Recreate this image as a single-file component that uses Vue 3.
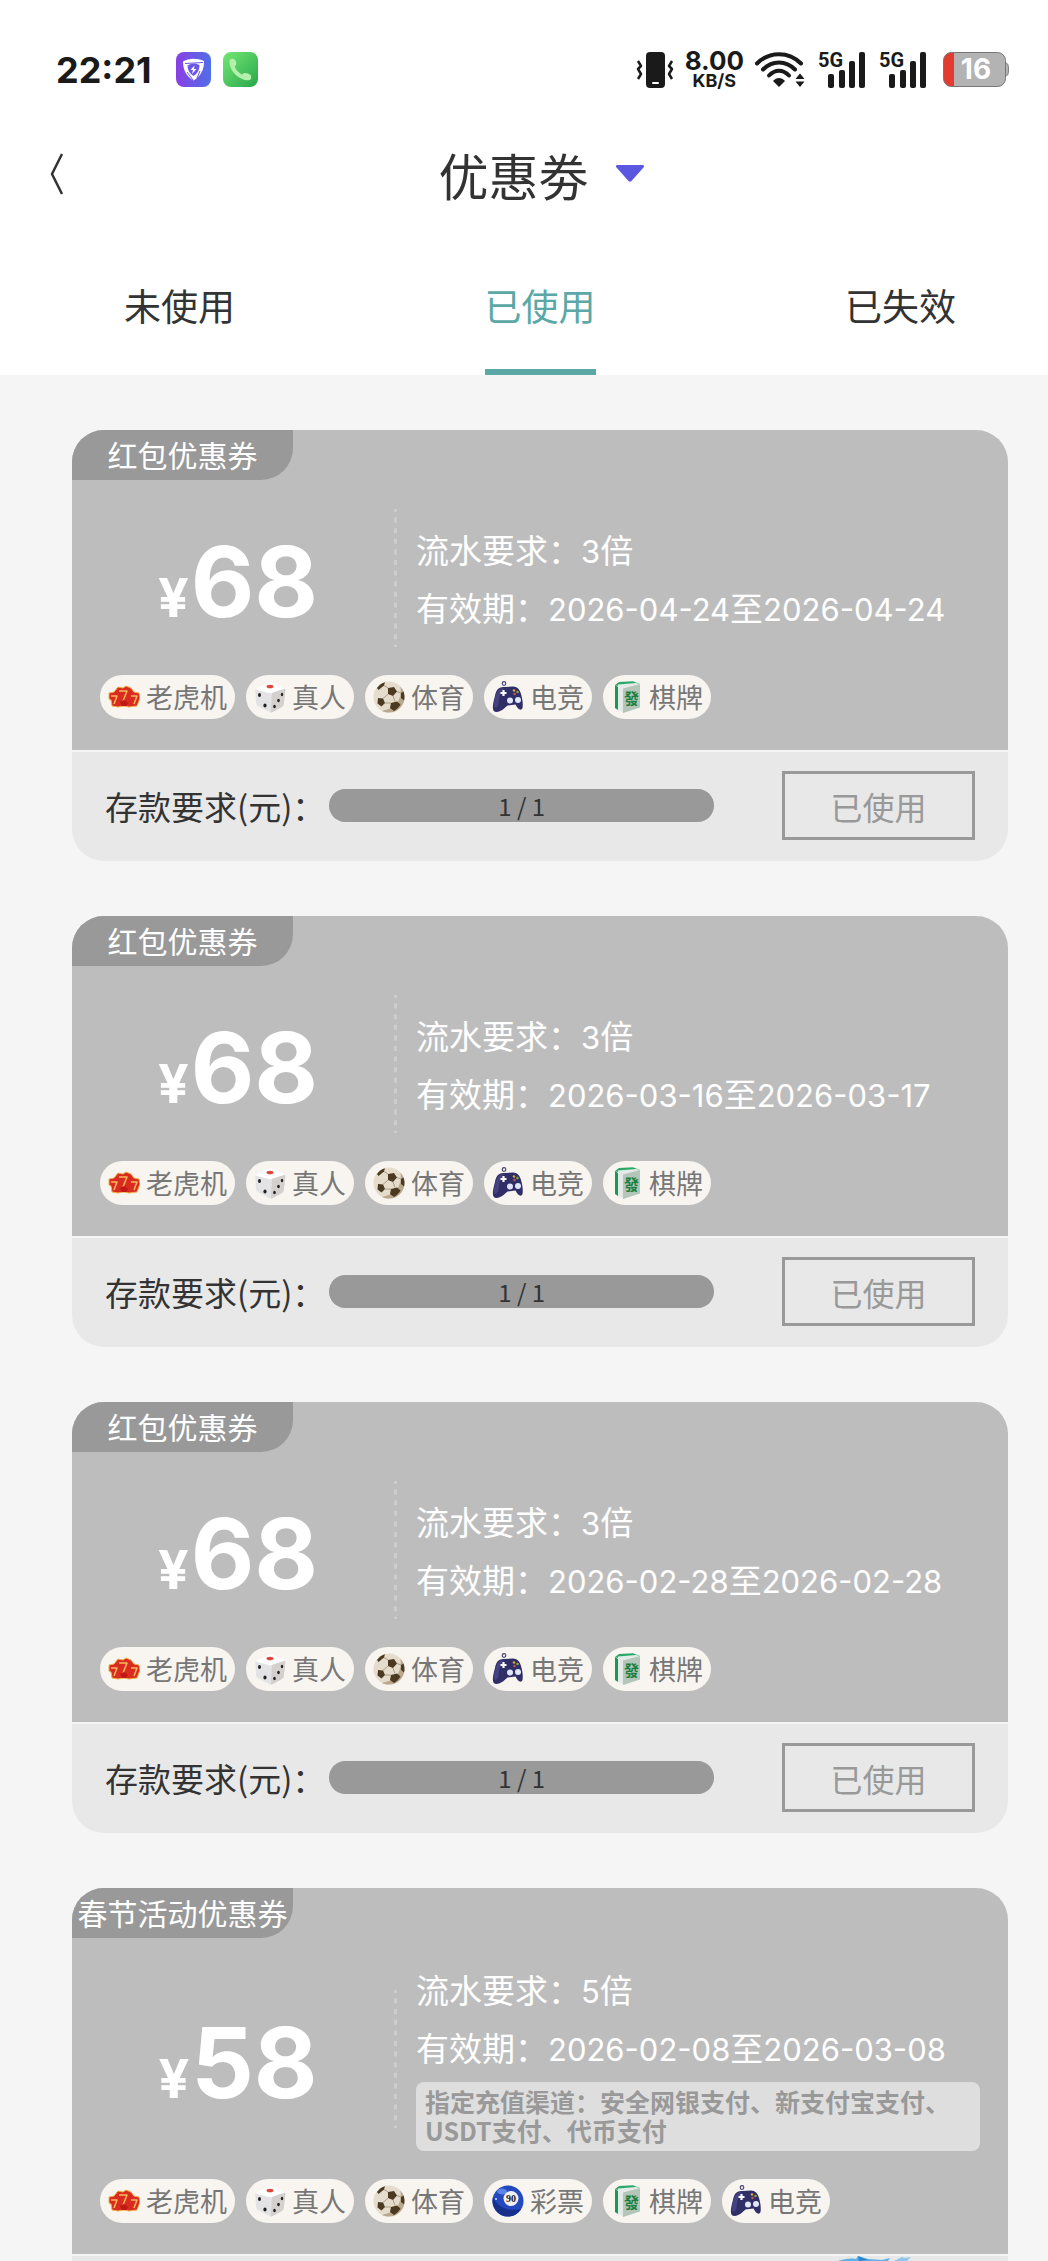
<template>
    <div class="page">
        <!-- Barre d'état -->
        <div class="status-bar">
            <span class="time">22:21</span>
            <svg class="app-icon" viewBox="0 0 35 35" aria-hidden="true">
                <defs>
                    <linearGradient id="shieldBg" x1="0" y1="0" x2="1" y2="0">
                        <stop offset="0" stop-color="#8a3fe4" />
                        <stop offset="1" stop-color="#4f6fe8" />
                    </linearGradient>
                </defs>
                <rect width="35" height="35" rx="8" fill="url(#shieldBg)" />
                <path d="M7 9.500C13 6 21 6 28 9c.3 8-3 15-10.500 19.500C10.500 24.500 7 18 7 9.500z" fill="#fff" />
                <path d="M11.500 13.500c4-2.700 8.500-2.700 12-.5 0 5-2 8.500-6 11-3.800-2.500-6-6-6-10.500z" fill="#6a57e6" />
                <path d="M9 11.500 27 10.500M11 20l6 8M24 19l-3 7" stroke="#6a57e6" stroke-width="1" fill="none" />
                <path d="m18.500 13.500-4 4.500h2.500l-1 4 4.500-5h-2.500z" fill="#fff" />
            </svg>
            <svg class="app-icon" viewBox="0 0 35 35" aria-hidden="true">
                <defs>
                    <linearGradient id="phoneBg" x1="0" y1="0" x2="1" y2="1">
                        <stop offset="0" stop-color="#74e874" />
                        <stop offset="1" stop-color="#27a64b" />
                    </linearGradient>
                </defs>
                <rect width="35" height="35" rx="8" fill="url(#phoneBg)" />
                <path d="M6.500 8.500c1-2.500 4.500-2.500 6 0 1.300 2.500 1 4.500-.8 6 1.200 3.500 4 6.500 7.300 8 1.500-1.800 4-2 6.500-.8 2.500 1 3 2.300 2.500 5-1 1.800-4 2-7 1C13.500 25.500 5.500 17 6.500 8.500z" fill="#b2f0ab" />
            </svg>

            <div class="status-right">
                <svg class="ic-vibrate" viewBox="0 0 38 36" aria-hidden="true">
                    <rect x="10" y="0" width="19" height="36" rx="4" fill="#1a1a1a" />
                    <rect x="16" y="30" width="7" height="2" rx="1" fill="#fff" />
                    <path d="M2 9l3 5-3 3 3 5-3 5M36 9l-3 5 3 3-3 5 3 5" fill="none" stroke="#1a1a1a" stroke-width="2.500" stroke-linejoin="round" />
                </svg>
                <div class="speed">
                    <span class="speed-value">8.00</span>
                    <span class="speed-unit">KB/S</span>
                </div>
                <svg class="ic-wifi" viewBox="0 0 50 36" aria-hidden="true">
                    <g fill="none" stroke="#1a1a1a" stroke-width="4" stroke-linecap="round">
                        <path d="M2 11.500C14-1 34-1 46 11.500" />
                        <path d="M8 17.500C17 8 31 8 40 17.500" />
                        <path d="M14 23.500c6-6.500 14-6.500 20 0" />
                    </g>
                    <path d="M18 29c3.500-4 8.500-4 12 0l-6 6z" fill="#1a1a1a" />
                    <path d="m45 21.500 4.500 5.500h-9zM45 35l4.500-5.500h-9z" fill="#1a1a1a" />
                </svg>
                <div v-for="n in 2" :key="n" class="signal">
                    <span class="signal-label">5G</span>
                    <svg viewBox="0 0 48 36" aria-hidden="true">
                        <g fill="#1a1a1a">
                            <rect x="10" y="22" width="6" height="14" rx="2" />
                            <rect x="21" y="18" width="6" height="18" rx="2" />
                            <rect x="31" y="9" width="6" height="27" rx="2" />
                            <rect x="41" y="0" width="6" height="36" rx="2" />
                        </g>
                    </svg>
                </div>
                <div class="battery">
                    <svg viewBox="0 0 66 35" aria-hidden="true">
                        <path d="M62 11c3 0 3.500 2 3.500 6.500S65 24 62 24z" fill="#b3b3b3" stroke="#777" />
                        <rect x=".5" y=".5" width="62" height="34" rx="8" fill="#b3b3b3" />
                        <path d="M11 .5H8.500a8 8 0 0 0-8 8v18a8 8 0 0 0 8 8H11z" fill="#e33b30" />
                        <rect x=".5" y=".5" width="62" height="34" rx="8" fill="none" stroke="#777" />
                    </svg>
                    <span>16</span>
                </div>
            </div>
        </div>

        <!-- Titre -->
        <header class="title-bar">
            <button type="button" class="btn-back" aria-label="返回">
                <svg viewBox="0 0 14 42" aria-hidden="true">
                    <path d="M12 1 2 21l10 20" fill="none" stroke="#333" stroke-width="2.500" />
                </svg>
            </button>
            <button type="button" class="btn-title">
                优惠劵
                <svg viewBox="0 0 28 17" aria-hidden="true">
                    <path d="M1.500 0h25c1.500 0 2 1.500 1 2.500L15.500 16c-1 1-2 1-3 0L.5 2.500C-.5 1.500 0 0 1.500 0z" fill="#5b57e0" />
                </svg>
            </button>
        </header>

        <nav class="tabs">
            <button
                v-for="tab in tabs"
                :key="tab"
                type="button"
                class="tab"
                :class="{ active: tab === activeTab }"
                @click="activeTab = tab"
            >{{ tab }}</button>
        </nav>

        <!-- Liste des coupons -->
        <main class="list">
            <article v-for="c in coupons" :key="c.id" class="card">
                <div class="card-body">
                    <span class="tag">{{ c.type }}</span>
                    <div class="row">
                        <div class="amount"><span class="currency">¥</span>{{ c.montant }}</div>
                        <svg class="separator" viewBox="0 0 3 138" aria-hidden="true">
                            <path d="M1.500 0V138" stroke="#cdcdcd" stroke-width="3" stroke-dasharray="5 5.600" stroke-dashoffset="2" />
                        </svg>
                        <div class="info">
                            <p>流水要求：<span class="num">{{ c.multiple }}</span>倍</p>
                            <p>有效期：<span class="num">{{ c.debut }}</span>至<span class="num">{{ c.fin }}</span></p>
                            <div v-if="c.canaux" class="channels">指定充值渠道：{{ c.canaux }}</div>
                        </div>
                    </div>
                    <ul class="games">
                        <li v-for="jeu in c.jeux" :key="jeu">
                            <svg v-if="jeu === '老虎机'" viewBox="0 0 32 32" aria-hidden="true">
                                <path d="M1 12l5-1 4-5 5 1 3-2 5 2 3 4 5 1 1 5-3 8-8 1-5-1-6 1-6-1-1-6-2-1z" fill="#d92b1f" stroke="#efb24a" stroke-width="1" />
                                <g fill="none" stroke="#f7b95c" stroke-width="1.500" stroke-linejoin="round">
                                    <path d="M11 10h8l-4 10" />
                                    <path d="M3 15h6l-3 8" />
                                    <path d="M23 15h6l-3 8" />
                                </g>
                                <path d="M12 21l4-2 4 3-2 3h-4z" fill="#c01812" />
                            </svg>
                            <svg v-else-if="jeu === '真人'" viewBox="0 0 32 32" aria-hidden="true">
                                <path d="M3 7 15 1.500c1-.5 2-.5 3 0L30 6c1 .5 1.500 1.500 1.300 3l-1.500 14c-.2 1.500-1 2.300-2 3l-9 5c-1 .6-2 .6-3 .2L4 25c-1-.6-1.800-1.500-2-3L1.300 10C1.200 8.500 1.800 7.600 3 7z" fill="#e3e3e5" />
                                <path d="M3 7 15 1.500c1-.5 2-.5 3 0L30 6c1 .5 1 1.500 0 2l-12 4c-1 .3-2 .3-3 0L3 9c-1.200-.4-1.200-1.500 0-2z" fill="#fff" />
                                <path d="m18 12 12-4c1 .2 1.400.6 1.300 1.500L29.800 23c-.2 1.500-1 2.300-2 3l-9 5-2 .4z" fill="#d3d0ce" />
                                <ellipse cx="16" cy="5.500" rx="3.500" ry="1.800" fill="#e0453c" />
                                <g fill="#222">
                                    <ellipse cx="5.500" cy="14" rx="1.500" ry="2" />
                                    <ellipse cx="11" cy="24.500" rx="1.600" ry="2" />
                                    <ellipse cx="28" cy="13.500" rx="1.200" ry="1.800" />
                                    <ellipse cx="24.500" cy="19.500" rx="1.300" ry="1.800" />
                                    <ellipse cx="20.500" cy="25.500" rx="1.300" ry="1.800" />
                                </g>
                            </svg>
                            <svg v-else-if="jeu === '体育'" viewBox="0 0 32 32" aria-hidden="true">
                                <circle cx="16" cy="16" r="15.500" fill="#e6dccb" />
                                <path d="M16 31.500A15.500 15.500 0 0 0 31.500 16c0-4-1.500-8-4-10.500C29 18 24 27 9 30c2 1 4.500 1.500 7 1.500z" fill="#b9a88e" />
                                <g fill="#4b3a22">
                                    <path d="m15 7 6-1 3 4.500-4 4.500-5-2z" />
                                    <path d="M4 7c2-3 5-5 8-5.800l-1 3.300L5.500 9z" />
                                    <path d="m5 17 5 .5 2 4.500-3.500 3.500-4-3z" />
                                    <path d="m18 22 6-1.500 3.500 3c-2 3.500-4 5-6.500 6.500L17 27z" />
                                    <path d="m28 12 2.500-1.500c1 3 1.200 6 .5 9l-3-2.500z" />
                                </g>
                                <path d="M15 13l-5 4.500M20 15l2 5.500M12 22l6 0M15 7l-4-2.500M24 10.500l4 1.500" stroke="#9d8d76" stroke-width=".8" fill="none" />
                            </svg>
                            <svg v-else-if="jeu === '电竞'" viewBox="0 0 32 32" aria-hidden="true">
                                <circle cx="12" cy="2.500" r="1.800" fill="none" stroke="#4a4778" stroke-width="1.200" />
                                <path d="M3 15C4 8 8 5.500 12 6l9-.5c4 0 7 3 8 7.500 1.500 5 2.200 10 1.500 14-1.500 3.500-5 1-7-3.500l-8 1C12.500 27 9 31 4.500 31 .5 31-.5 27 3 15z" fill="#302e66" />
                                <path d="M3.500 16C5 9 8 7 12 7c-3 3-5 9-5.500 16-.4 3-3 5-4.500 3-.8-2 .3-6 1.500-10z" fill="#45437f" />
                                <path d="M11.500 9v6M8.500 12h6" stroke="#fff" stroke-width="2.200" />
                                <circle cx="18" cy="19.500" r="3" fill="#dfe6fb" />
                                <circle cx="26" cy="19" r="3" fill="#dfe6fb" />
                                <circle cx="22" cy="9.500" r="1.300" fill="#d6a53c" />
                                <circle cx="25.500" cy="11" r="1.300" fill="#86a14b" />
                                <circle cx="22.500" cy="13" r="1.300" fill="#b8574e" />
                            </svg>
                            <svg v-else-if="jeu === '棋牌'" viewBox="0 0 32 32" aria-hidden="true">
                                <path d="M4 4 8 1l14-.8L29 3 9 6z" fill="#2aa86a" />
                                <path d="M4 4l3 2v23l-3-2z" fill="#169a55" />
                                <path d="M7 3.500 25 2l4 1v23l-16 6-6-3z" fill="#e4ebe7" />
                                <path d="M12 7.500 29 3v23.500L12 32z" fill="#b3c6b9" />
                                <text x="13" y="23" class="tile-char">發</text>
                            </svg>
                            <svg v-else viewBox="0 0 32 32" aria-hidden="true">
                                <circle cx="16" cy="16" r="15.500" fill="#2448bd" />
                                <path d="M16 31.500A15.500 15.500 0 0 1 1 12c3 9 14 15 28 12-3 5-8 7.500-13 7.500z" fill="#16308c" />
                                <ellipse cx="10" cy="6.500" rx="5" ry="3" fill="#5d84e8" />
                                <circle cx="19" cy="13.500" r="7.500" fill="#eef0f4" />
                                <text x="14" y="17" class="ball-num">90</text>
                                <circle cx="4" cy="14" r="1" fill="#cfe0ff" />
                            </svg>
                            {{ jeu }}
                        </li>
                    </ul>
                </div>
                <div class="card-footer">
                    <span :id="'depot-' + c.id">存款要求(元)：</span>
                    <div
                        class="progress"
                        role="progressbar"
                        :aria-labelledby="'depot-' + c.id"
                        :aria-valuenow="c.depot"
                        :aria-valuemax="c.objectif"
                    >
                        <div class="progress-fill" :style="{ width: progression(c) + '%' }"></div>
                        <span>{{ c.depot }} / {{ c.objectif }}</span>
                    </div>
                    <button type="button" class="btn-used" disabled>已使用</button>
                </div>
            </article>
        </main>

        <!-- Bouton flottant, partiellement visible en bas -->
        <svg class="floating" viewBox="0 0 74 5" aria-hidden="true">
            <path d="M0 5c6-2 12-3 18-2l2-3 10 3 14 1 8-2-2 3z" fill="#5fb0e6" />
            <path d="M20 0l10 4-9 1z" fill="#2a86d0" />
            <path d="M56 5l8-4 3 1 6-1-4 4z" fill="#8fc6ee" />
        </svg>
    </div>
</template>

<script setup>
import { ref } from 'vue'

const tabs = ['未使用', '已使用', '已失效']
const activeTab = ref('已使用')

const jeuxStandard = ['老虎机', '真人', '体育', '电竞', '棋牌']

const coupons = ref([
    { id: 1, type: '红包优惠券', montant: 68, multiple: 3, debut: '2026-04-24', fin: '2026-04-24', jeux: jeuxStandard, depot: 1, objectif: 1 },
    { id: 2, type: '红包优惠券', montant: 68, multiple: 3, debut: '2026-03-16', fin: '2026-03-17', jeux: jeuxStandard, depot: 1, objectif: 1 },
    { id: 3, type: '红包优惠券', montant: 68, multiple: 3, debut: '2026-02-28', fin: '2026-02-28', jeux: jeuxStandard, depot: 1, objectif: 1 },
    {
        id: 4,
        type: '春节活动优惠券',
        montant: 58,
        multiple: 5,
        debut: '2026-02-08',
        fin: '2026-03-08',
        canaux: '安全网银支付、新支付宝支付、USDT支付、代币支付',
        jeux: ['老虎机', '真人', '体育', '彩票', '棋牌', '电竞'],
        depot: 1,
        objectif: 1,
    },
])

function progression(c) {
    return Math.min(100, (c.depot / c.objectif) * 100)
}
</script>

<style>
body {
    margin: 0;
    background-color: #f5f5f5;
}
</style>

<style scoped>
.page {
    position: relative;
    height: 100vh;
    overflow: hidden;
    display: flex;
    flex-direction: column;
    background-color: #f5f5f5;
    color: #333;
    font-family: "Noto Sans CJK SC", "Noto Sans", sans-serif;
}

button {
    padding: 0;
    border: none;
    background: none;
    color: inherit;
    font-family: inherit;
}

svg {
    display: block;
    flex: none;
}

.status-bar {
    flex: none;
    display: flex;
    align-items: center;
    gap: 12px;
    height: 115px;
    padding: 24px 39px 0 56px;
    box-sizing: border-box;
    background-color: #fff;
    color: #1a1a1a;
    font-family: Inter, sans-serif;
}

.time {
    margin-right: 12px;
    font-size: 36px;
    font-weight: 700;
}

.app-icon {
    width: 35px;
    height: 35px;
}

.status-right {
    display: flex;
    align-items: center;
    gap: 13px;
    margin-left: auto;
}

.ic-vibrate {
    width: 38px;
    height: 36px;
}

.speed {
    display: flex;
    flex-direction: column;
    align-items: center;
    margin: 0 -2px;
    font-weight: 700;
}

.speed-value {
    font-size: 26px;
    line-height: 22px;
}

.speed-unit {
    font-size: 18px;
    line-height: 18px;
}

.ic-wifi {
    width: 50px;
    height: 36px;
}

.signal {
    position: relative;
}

.signal svg {
    width: 48px;
    height: 36px;
}

.signal-label {
    position: absolute;
    top: 0;
    left: 0;
    font-family: Roboto, sans-serif;
    font-size: 20px;
    font-weight: 700;
    line-height: 16px;
}

.battery {
    position: relative;
    margin-left: 3px;
}

.battery svg {
    width: 66px;
    height: 35px;
}

.battery span {
    position: absolute;
    inset: 0;
    color: #fff;
    font-size: 28px;
    font-weight: 700;
    line-height: 35px;
    text-align: center;
}

.title-bar {
    flex: none;
    display: flex;
    align-items: center;
    height: 117px;
    padding: 0 30px 0 50px;
    background-color: #fff;
}

.btn-back svg {
    width: 14px;
    height: 42px;
}

.btn-title {
    display: flex;
    align-items: center;
    gap: 27px;
    margin: 0 auto;
    font-size: 50px;
    line-height: 58px;
}

.btn-title svg {
    width: 28px;
    height: 17px;
}

.tabs {
    flex: none;
    display: flex;
    justify-content: space-between;
    height: 143px;
    padding: 0 92px 0 124px;
    box-sizing: border-box;
    background-color: #fff;
}

.tab {
    padding-top: 8px;
    border-bottom: 6px solid transparent;
    font-size: 37px;
}

.tab.active {
    border-bottom-color: #5ba8a6;
    color: #5ba8a6;
}

.list {
    display: flex;
    flex-direction: column;
    gap: 55px;
    padding: 55px 40px 0 72px;
}

.card {
    flex: none;
    overflow: hidden;
    border-radius: 32px;
}

.card-body {
    position: relative;
    padding: 79px 28px 31px 0;
    background-color: #bdbdbd;
    color: #fff;
}

.tag {
    position: absolute;
    top: 0;
    left: 0;
    width: 221px;
    height: 50px;
    border-bottom-right-radius: 32px;
    background-color: #999;
    font-size: 30px;
    line-height: 48px;
    text-align: center;
    white-space: nowrap;
}

.row {
    display: flex;
    align-items: center;
}

.amount {
    flex: none;
    width: 322px;
    padding: 8px 0 0 10px;
    box-sizing: border-box;
    font-family: Inter, sans-serif;
    font-size: 98px;
    font-weight: 700;
    line-height: 120px;
    text-align: center;
}

.currency {
    margin-right: 2px;
    font-size: 54px;
    line-height: 1;
}

.separator {
    width: 3px;
    height: 138px;
}

.info {
    flex: 1;
    margin-left: 19px;
    font-size: 33px;
    line-height: 44px;
}

.info p {
    margin: 0;
}

.info p + p {
    margin-top: 14px;
}

.num {
    font-family: Inter, sans-serif;
    font-size: 31px;
    line-height: 1;
}

.channels {
    margin-top: 13px;
    padding: 5px 9px 6px;
    border-radius: 8px;
    background-color: #dedede;
    color: #999;
    font-size: 25px;
    font-weight: 700;
    line-height: 29px;
}

.games {
    display: flex;
    gap: 11px;
    margin: 28px 0 0 28px;
    padding: 0;
    list-style: none;
}

.games li {
    display: flex;
    align-items: center;
    gap: 6px;
    padding: 0 8px;
    border-radius: 22px;
    background-color: #f8f5f0;
    color: #777;
    font-size: 27px;
    line-height: 44px;
}

.games svg {
    width: 32px;
    height: 32px;
}

.tile-char {
    fill: #18803c;
    font-size: 15px;
    font-weight: 700;
}

.ball-num {
    fill: #222;
    font-family: "Liberation Serif", serif;
    font-size: 10px;
    font-weight: 700;
}

.card-footer {
    display: flex;
    align-items: center;
    margin-top: 2px;
    padding: 19px 33px 21px;
    background-color: #e8e8e8;
    font-size: 33px;
}

.progress {
    position: relative;
    flex: 1;
    height: 33px;
    margin: 0 68px 0 4px;
    border-radius: 17px;
    background-color: #ccc;
    font-size: 24px;
    line-height: 33px;
    text-align: center;
}

.progress-fill {
    position: absolute;
    inset: 0 auto 0 0;
    border-radius: 17px;
    background-color: #999;
}

.progress span {
    position: relative;
}

.btn-used {
    width: 193px;
    height: 69px;
    border: 3px solid #999;
    color: #999;
    font-size: 32px;
}

.floating {
    position: absolute;
    right: 136px;
    bottom: 0;
    width: 74px;
    height: 5px;
}
</style>
